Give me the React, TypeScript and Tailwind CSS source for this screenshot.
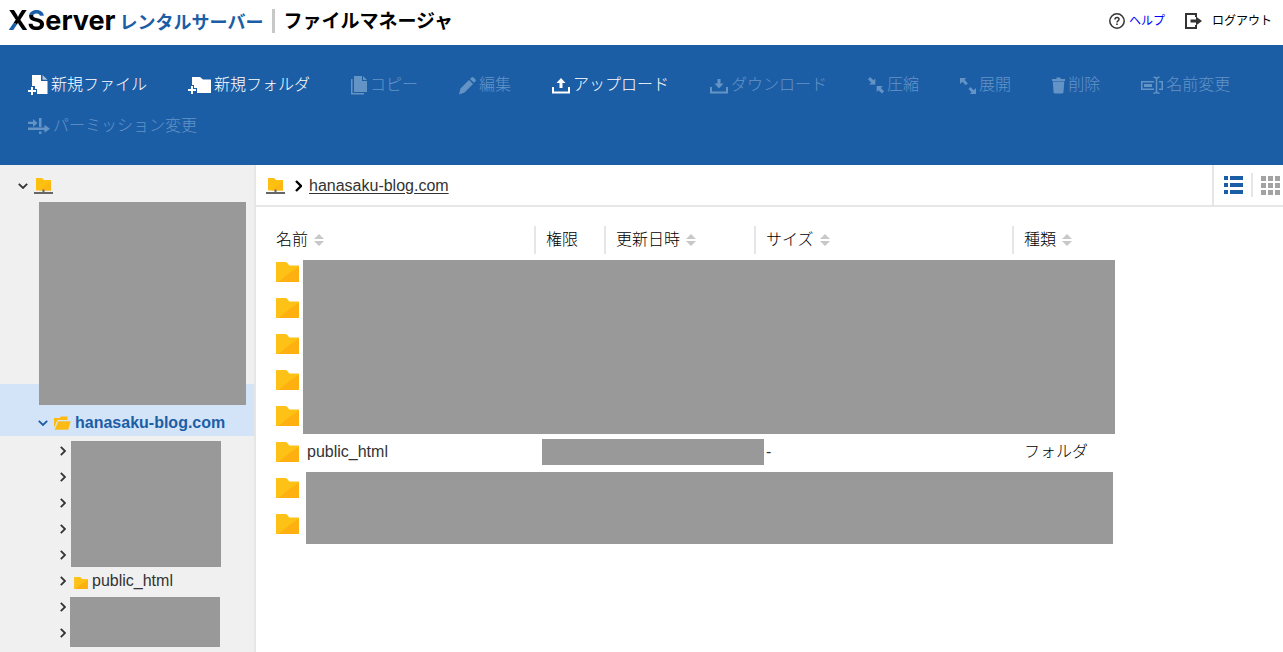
import React, { useState } from "react";

type IconProps = { className?: string };

const NewFileIcon = () => (
  <svg width="20" height="22" viewBox="0 0 20 22" fill="currentColor" aria-hidden="true">
    <path d="M4 1h9v6h6.500v13H9v-5H7v-3H4z" />
    <path d="M14.500 1l5 4.800h-5z" opacity=".65" />
    <path d="M3 13h2v3h3v2H5v3H3v-3H0v-2h3z" />
  </svg>
);
const NewFolderIcon = () => (
  <svg width="23" height="22" viewBox="0 0 23 22" fill="currentColor" aria-hidden="true">
    <path d="M4 3h8l3 2.500h8V19H9v-5H6v-3H4z" />
    <path d="M3 12h2v3h3v2H5v3H3v-3H0v-2h3z" />
  </svg>
);
const CopyIcon = () => (
  <svg width="16" height="20" viewBox="0 0 16 20" fill="currentColor" aria-hidden="true">
    <path d="M3 1h8v5h5v11H3z" />
    <path d="M12 1l4 4h-4z" />
    <path d="M0 4h1.500v14H13v1.500H0z" />
  </svg>
);
const EditIcon = () => (
  <svg width="17" height="20" viewBox="0 0 17 20" fill="currentColor" aria-hidden="true">
    <path d="M12.500 2.500q1-.9 2 0l2 2q.8 1 0 1.800L15 7.800 11 4z" />
    <path d="M10 5l4 4-8.500 8.500-5.500 2 1.500-6z" />
  </svg>
);
const UploadIcon = () => (
  <svg width="18" height="20" viewBox="0 0 18 20" fill="currentColor" aria-hidden="true">
    <path d="M0 12h2v4.500h14V12h2v6.500H0z" />
    <path d="M9 3l4.500 5h-3v5h-3V8h-3z" />
  </svg>
);
const DownloadIcon = () => (
  <svg width="18" height="20" viewBox="0 0 18 20" fill="currentColor" aria-hidden="true">
    <path d="M0 12h2v4.500h14V12h2v6.500H0z" />
    <path d="M9 13.500L4.500 8.500h3V4h3v4.500h3z" />
  </svg>
);
const CompressIcon = () => (
  <svg width="16" height="20" viewBox="0 0 16 20" fill="currentColor" aria-hidden="true">
    <path d="M2 2l3.500 3.200L7.300 3.500v6H1.200l2-2L0 4.200z" />
    <path d="M14 18.500l-3.500-3.200-1.800 1.700v-6h6.100l-2 2L16 16.200z" />
  </svg>
);
const ExpandIcon = () => (
  <svg width="16" height="20" viewBox="0 0 16 20" fill="currentColor" aria-hidden="true">
    <path d="M0 3h6.300L4.500 4.800l3.300 3.400-2 2-3.400-3.500L0 9z" />
    <path d="M16 19H9.700l1.800-1.800-3-3.200 2-2 3.100 3.300L16 13z" />
  </svg>
);
const TrashIcon = () => (
  <svg width="13" height="20" viewBox="0 0 13 20" fill="currentColor" aria-hidden="true">
    <path d="M0 4h4.500V2.500h4V4H13v2H0z" />
    <path d="M.8 6.500h11.500L11.500 17q-.1 1.500-1.500 1.500H3q-1.400 0-1.500-1.500z" />
  </svg>
);
const RenameIcon = () => (
  <svg width="22" height="20" viewBox="0 0 22 20" fill="none" stroke="currentColor" strokeWidth="1.500" aria-hidden="true">
    <path d="M13 6.750H.750v7.500H13M18 6.750h3.250v7.500H18M12.500 2.200q3 0 3 2v12q0 2-3 2M18.500 2.200q-3 0-3 2v12q0 2 3 2" />
    <path d="M3 9h8v3H3z" fill="currentColor" stroke="none" />
  </svg>
);
const PermissionIcon = () => (
  <svg width="22" height="20" viewBox="0 0 22 20" fill="currentColor" aria-hidden="true">
    <path d="M0 5.800h5V3l4.500 4L5 11V8H0zM11 2h2.500v9H11zM0 11.500h16.500V8.800L22 12.800l-5.500 4V14H0zM11 15.500h2.500V18H11z" />
  </svg>
);

type Tool = { label: string; icon: React.ReactNode; enabled?: boolean };

const tools: Tool[] = [
  { label: "新規ファイル", icon: <NewFileIcon />, enabled: true },
  { label: "新規フォルダ", icon: <NewFolderIcon />, enabled: true },
  { label: "コピー", icon: <CopyIcon /> },
  { label: "編集", icon: <EditIcon /> },
  { label: "アップロード", icon: <UploadIcon />, enabled: true },
  { label: "ダウンロード", icon: <DownloadIcon /> },
  { label: "圧縮", icon: <CompressIcon /> },
  { label: "展開", icon: <ExpandIcon /> },
  { label: "削除", icon: <TrashIcon /> },
  { label: "名前変更", icon: <RenameIcon /> },
  { label: "パーミッション変更", icon: <PermissionIcon /> },
];

const Chevron = () => (
  <svg width="6" height="10" viewBox="0 0 6 10" fill="none" stroke="currentColor" strokeWidth="1.800" aria-hidden="true">
    <path d="M.8.800L5 5 .8 9.200" />
  </svg>
);
const ChevronDown = () => (
  <svg width="10" height="6" viewBox="0 0 10 6" fill="none" stroke="currentColor" strokeWidth="1.800" aria-hidden="true">
    <path d="M.8.800L5 5 9.200.8" />
  </svg>
);
const Folder = ({ className = "" }: IconProps) => (
  <svg viewBox="0 0 23 20" className={className} aria-hidden="true">
    <path d="M.5 0h9q1 0 1.800 1l2 2.500h9.200q.5 0 .5.500v15.500q0 .5-.5.500H.5q-.5 0-.5-.5V.5Q0 0 .5 0z" fill="#fdc215" />
    <path d="M23 4.500L14 10.500 2.500 20h20q.5 0 .5-.5z" fill="#fdb00f" />
  </svg>
);
const RootFolder = () => (
  <svg width="19" height="18" viewBox="0 0 19 18" aria-hidden="true">
    <path d="M2 1h6l2 2h7v10.500H2z" fill="#fdc010" />
    <path d="M17 4v9.500H5z" fill="#fdb713" />
    <path d="M8.500 12.500h2V15H19v2H0v-2h8.500z" fill="#666" />
  </svg>
);
const OpenFolder = () => (
  <svg width="17" height="14" viewBox="0 0 17 14" fill="#fdba12" aria-hidden="true">
    <path d="M0 2h5.500l1.500-1.500h6.500V4H3.500L0 11.500z" />
    <path d="M4 5h13l-2.500 9H.3z" stroke="#d3e4f8" strokeWidth=".6" />
  </svg>
);

const SortIcon = () => (
  <svg width="10" height="12" viewBox="0 0 10 12" fill="#c8c8c8" aria-hidden="true">
    <path d="M5 0l5 5H0zM5 12L0 7h10z" />
  </svg>
);

const columns = [
  { label: "名前", width: "w-[258px]", sortable: true },
  { label: "権限", width: "w-[70px]", sortable: false },
  { label: "更新日時", width: "w-[150px]", sortable: true },
  { label: "サイズ", width: "w-[258px]", sortable: true },
  { label: "種類", width: "w-auto", sortable: true },
];

const files = ["", "", "", "", "", "public_html", "", ""];
const treeItems = ["", "", "", "", "", "public_html", "", ""];

function Header() {
  return (
    <header className="flex h-[45px] shrink-0 items-center justify-between bg-white pr-[11px] pb-[3px] pl-2">
      <div className="flex items-center">
        <a href="#" className="flex items-center whitespace-nowrap">
          <span className="font-[Inter,sans-serif] text-[27px] leading-8 font-bold text-black">
            <span className="bg-[linear-gradient(38deg,#1c5ea6_40%,#000_40%)] bg-clip-text text-transparent">X</span>
            <span className="bg-[linear-gradient(190deg,#1c5ea6_38%,#000_38%)] bg-clip-text text-transparent">S</span>
            erver
          </span>
          <span className="ml-1 pt-1 text-lg leading-8 font-bold text-[#1c5ea6]">レンタルサーバー</span>
        </a>
        <span className="ml-[9px] h-6 w-[3px] bg-[#c8c8c8]" />
        <h1 className="ml-2 pt-[2px] text-[19px] leading-8 font-bold whitespace-nowrap text-black">ファイルマネージャ</h1>
      </div>
      <nav className="flex items-center gap-5 text-xs">
        <a href="#" className="flex items-center gap-1 text-[#0000ff]">
          <svg width="16" height="16" viewBox="0 0 16 16" fill="none" stroke="#333" aria-hidden="true">
            <circle cx="8" cy="8" r="7.200" strokeWidth="1.500" />
            <path d="M6 6.500q0-2 2-2t2 1.800q0 1-1 1.600-1 .6-1 1.600" strokeWidth="1.500" />
            <path d="M8 10.500v1.500" strokeWidth="1.600" />
          </svg>
          ヘルプ
        </a>
        <a href="#" className="flex items-center gap-[10px] text-black">
          <svg width="17" height="16" viewBox="0 0 17 16" fill="#333" aria-hidden="true">
            <path d="M0 0h12v4h-2V2H2v12h8v-2h2v4H0z" />
            <path d="M5.500 6.500H11V3.500L17 8l-6 4.500v-3H5.500z" />
          </svg>
          ログアウト
        </a>
      </nav>
    </header>
  );
}

function Toolbar() {
  return (
    <div className="flex min-h-[120px] shrink-0 flex-wrap content-start gap-x-[41px] gap-y-[17px] bg-[#1c5ea6] px-7 pt-7 font-light">
      {tools.map((t) => (
        <button
          key={t.label}
          disabled={!t.enabled}
          className={`flex h-6 items-center gap-[3px] text-base leading-6 whitespace-nowrap ${t.enabled ? "text-white" : "text-[#6493c6]"}`}
        >
          {t.icon}
          {t.label}
        </button>
      ))}
    </div>
  );
}

function Sidebar() {
  return (
    <aside className="w-64 shrink-0 border-r-2 border-[#e6e6e6] bg-[#f0f0f0] text-base text-[#333]">
      <div className="relative h-[219px]">
        <button aria-label="ルート" className="flex h-[42px] items-center gap-[6px] pl-[18px]">
          <ChevronDown />
          <RootFolder />
        </button>
        <div className="absolute top-[37px] left-[39px] z-10 h-[203px] w-[207px] bg-[#999]" />
      </div>
      <a href="#" className="flex h-[52px] items-center bg-[#d3e4f8] pt-[26px] pl-[38px] font-bold text-[#1c5ea6]">
        <ChevronDown />
        <span className="mr-1 ml-[6px]">
          <OpenFolder />
        </span>
        hanasaku-blog.com
      </a>
      <ul className="relative pt-[2px]">
        {treeItems.map((name, i) => (
          <li key={i} className="flex h-[26px] items-center pl-[60px]">
            <Chevron />
            {name && (
              <a href="#" className="flex items-center gap-1 pl-2">
                <Folder className="mt-1 h-3 w-[14px]" />
                {name}
              </a>
            )}
          </li>
        ))}
        <li aria-hidden="true" className="absolute top-[5px] left-[71px] h-[126px] w-[150px] bg-[#999]" />
        <li aria-hidden="true" className="absolute top-[161px] left-[70px] h-[50px] w-[150px] bg-[#999]" />
      </ul>
    </aside>
  );
}

function PathBar({ view, setView }: { view: string; setView: (v: string) => void }) {
  const squares = [0, 7, 14];
  return (
    <div className="flex h-[42px] border-b-2 border-[#e6e6e6]">
      <nav className="flex flex-1 items-center pt-px pl-[10px]">
        <a href="#" aria-label="ルート">
          <RootFolder />
        </a>
        <svg width="7" height="12" viewBox="0 0 7 12" fill="none" stroke="#000" strokeWidth="2.400" className="mr-[7px] ml-[10px]" aria-hidden="true">
          <path d="M1 1l5 5-5 5" />
        </svg>
        <a href="#" className="text-base underline underline-offset-2">
          hanasaku-blog.com
        </a>
      </nav>
      <div className="flex items-center border-l-2 border-[#e6e6e6] pr-[3px] pl-[10px]">
        <button aria-label="リスト表示" aria-pressed={view === "list"} onClick={() => setView("list")}>
          <svg width="19" height="18" viewBox="0 0 19 18" fill="#1c5ea6" aria-hidden="true">
            <path d="M0 0h4v4H0zM6 0h13v4H6zM0 7h4v4H0zM6 7h13v4H6zM0 14h4v4H0zM6 14h13v4H6z" />
          </svg>
        </button>
        <span className="mr-2 ml-2 h-6 w-[2px] bg-[#e6e6e6]" />
        <button aria-label="グリッド表示" aria-pressed={view === "grid"} onClick={() => setView("grid")}>
          <svg width="19" height="19" viewBox="0 0 19 19" fill="#a3a3a3" aria-hidden="true">
            {squares.map((y) => squares.map((x) => <rect key={`${x}-${y}`} x={x} y={y} width="5" height="5" />))}
          </svg>
        </button>
      </div>
    </div>
  );
}

function FileTable() {
  return (
    <div className="relative pt-[15px] pl-5">
      <table className="w-full table-fixed border-collapse text-left text-base text-[#333]">
        <thead>
          <tr className="h-8">
            {columns.map((c, i) => (
              <th key={c.label} className={`p-0 font-light text-black ${c.width}`}>
                <div className={`mt-1 flex h-7 items-center ${i ? "border-l-2 border-[#e6e6e6] pl-[10px]" : ""}`}>
                  {c.sortable ? (
                    <button className="flex items-center gap-[6px] whitespace-nowrap">
                      {c.label}
                      <SortIcon />
                    </button>
                  ) : (
                    c.label
                  )}
                </div>
              </th>
            ))}
          </tr>
        </thead>
        <tbody>
          {files.map((name, i) => (
            <tr key={i} className="h-9">
              <td className="p-0">
                <div className="flex items-center gap-2">
                  <Folder className="h-5 w-[23px]" />
                  {name && <a href="#">{name}</a>}
                </div>
              </td>
              <td className="p-0" />
              <td className="p-0" />
              <td className="p-0 pl-3">{name && "-"}</td>
              <td className="p-0 pl-3 font-light text-black">{name && "フォルダ"}</td>
            </tr>
          ))}
        </tbody>
      </table>
      <div className="absolute top-[53px] left-[47px] h-[174px] w-[812px] bg-[#999]" />
      <div className="absolute top-[232px] left-[286px] h-[26px] w-[222px] bg-[#999]" />
      <div className="absolute top-[265px] left-[50px] h-[72px] w-[807px] bg-[#999]" />
    </div>
  );
}

export default function App() {
  const [view, setView] = useState("list");
  return (
    <div className="flex min-h-screen flex-col bg-white font-['Liberation_Sans','Noto_Sans_CJK_JP',sans-serif] text-[#333]">
      <Header />
      <Toolbar />
      <div className="flex flex-1">
        <Sidebar />
        <main className="min-w-0 flex-1">
          <PathBar view={view} setView={setView} />
          <FileTable />
        </main>
      </div>
    </div>
  );
}
